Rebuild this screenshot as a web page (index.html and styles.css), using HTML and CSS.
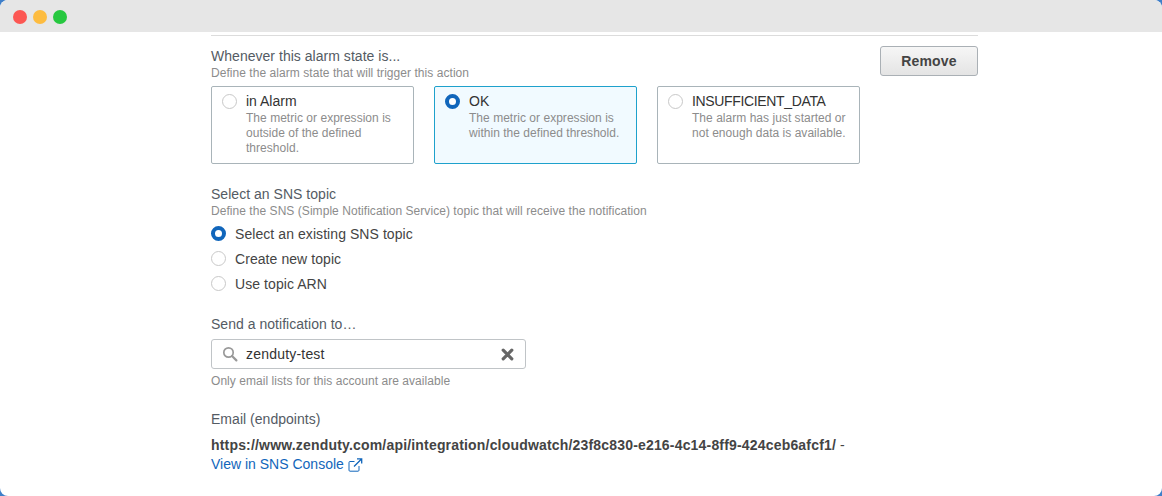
FILE: index.html
```html
<!DOCTYPE html>
<html lang="en">
<head>
  <meta charset="UTF-8">
  <title>Notification</title>
  <link rel="stylesheet" href="styles.css">
</head>
<body>
  <div class="window">
    <div class="titlebar">
      <span class="dot dot-red"></span>
      <span class="dot dot-yellow"></span>
      <span class="dot dot-green"></span>
    </div>

    <div class="content">
      <div class="rule"></div>

      <div class="state-head">
        <div>
          <div class="label">Whenever this alarm state is...</div>
          <div class="hint">Define the alarm state that will trigger this action</div>
        </div>
        <button class="remove">Remove</button>
      </div>

      <div class="cards">
        <div class="card">
          <span class="radio"></span>
          <div>
            <div class="card-title">in Alarm</div>
            <div class="card-text">The metric or expression is outside of the defined threshold.</div>
          </div>
        </div>
        <div class="card card-on">
          <span class="radio radio-on"></span>
          <div>
            <div class="card-title">OK</div>
            <div class="card-text">The metric or expression is within the defined threshold.</div>
          </div>
        </div>
        <div class="card">
          <span class="radio"></span>
          <div>
            <div class="card-title card-title-caps">INSUFFICIENT_DATA</div>
            <div class="card-text">The alarm has just started or not enough data is available.</div>
          </div>
        </div>
      </div>

      <div class="topic">
        <div class="label">Select an SNS topic</div>
        <div class="hint">Define the SNS (Simple Notification Service) topic that will receive the notification</div>
        <div class="options">
          <div class="option"><span class="radio radio-on"></span>Select an existing SNS topic</div>
          <div class="option"><span class="radio"></span>Create new topic</div>
          <div class="option"><span class="radio"></span>Use topic ARN</div>
        </div>
      </div>

      <div class="send">
        <div class="label">Send a notification to…</div>
        <div class="search">
          <svg class="search-icon" width="16" height="16" viewBox="0 0 16 16">
            <circle cx="6.5" cy="6.5" r="4.7" fill="none" stroke="#999" stroke-width="1.7"/>
            <path d="M10 10l4.4 4.4" fill="none" stroke="#999" stroke-width="2.2" stroke-linecap="round"/>
          </svg>
          <span class="search-text">zenduty-test</span>
          <svg class="clear-icon" width="13" height="13" viewBox="0 0 13 13">
            <path d="M2.2 2.200l8.600 8.600M10.800 2.200l-8.600 8.600" fill="none" stroke="#666" stroke-width="3.200" stroke-linecap="round"/>
          </svg>
        </div>
        <div class="hint">Only email lists for this account are available</div>
      </div>

      <div class="endpoints">
        <div class="label">Email (endpoints)</div>
        <div class="endpoint-url"><strong>https://www.zenduty.com/api/integration/cloudwatch/23f8c830-e216-4c14-8ff9-424ceb6afcf1/</strong> -</div>
        <a class="console-link" href="#">View in SNS Console
          <svg width="15" height="14" viewBox="0 0 15 14">
            <path d="M11 8v4.200a1 1 0 0 1-1 1H2a1 1 0 0 1-1-1V4.500a1 1 0 0 1 1-1h4.500" fill="none" stroke="#1166bb" stroke-width="1"/>
            <path d="M6 8.500L13.500 1M9 .8h4.700v4.700" fill="none" stroke="#1166bb" stroke-width="1.300"/>
          </svg>
        </a>
      </div>
    </div>
  </div>
</body>
</html>
```

FILE: styles.css
```css
* {
  margin: 0;
  padding: 0;
  box-sizing: border-box;
}

html, body {
  height: 100%;
  overflow: hidden;
}

body {
  background: #3f7fc9;
  font-family: 'Liberation Sans', Arial, sans-serif;
  color: #444;
}

.window {
  height: 496px;
  background: #fff;
  border-radius: 8px;
  overflow: hidden;
}

.titlebar {
  display: flex;
  align-items: center;
  gap: 6px;
  height: 32px;
  padding: 1px 0 0 13px;
  background: #e6e6e6;
}

.dot {
  width: 14px;
  height: 14px;
  border-radius: 50%;
}

.dot-red { background: #fc5753; }
.dot-yellow { background: #fdbc40; }
.dot-green { background: #27c840; }

.content {
  width: 767px;
  margin-left: 211px;
  padding-top: 3px;
}

.rule {
  height: 1px;
  background: #dcdcdc;
}

.state-head {
  display: flex;
  justify-content: space-between;
  align-items: flex-start;
  padding-top: 10px;
}

.label {
  font-size: 14px;
  line-height: 20px;
  letter-spacing: 0.03px;
  color: #545b64;
}

.hint {
  font-size: 12px;
  line-height: 14px;
  letter-spacing: 0.05px;
  color: #8c8c8c;
}

.remove {
  width: 98px;
  height: 30px;
  border: 1px solid #aab0b5;
  border-radius: 3px;
  background: linear-gradient(#f6f6f6, #e4e4e4);
  font-family: inherit;
  font-size: 14px;
  font-weight: bold;
  letter-spacing: 0.15px;
  color: #444;
}

.cards {
  display: flex;
  gap: 20px;
  margin-top: 6px;
}

.card {
  display: flex;
  gap: 9px;
  width: 203px;
  height: 78px;
  padding: 7px 10px;
  border: 1px solid #a9b4b9;
  border-radius: 2px;
}

.card-on {
  background: #f1faff;
  border-color: #1ea1cc;
}

.card-title {
  margin-bottom: 3px;
  font-size: 14px;
  line-height: 14px;
  color: #333;
}

.card-title-caps {
  letter-spacing: -0.35px;
}

.card-text {
  font-size: 12px;
  line-height: 15px;
  letter-spacing: 0.03px;
  color: #8c8c8c;
}

.radio {
  flex: none;
  width: 15px;
  height: 15px;
  border: 1px solid #c8c8c8;
  border-radius: 50%;
  background: #fff;
}

.radio-on {
  border: 4px solid #1166bb;
}

.topic {
  margin-top: 20px;
}

.options {
  margin-top: 3px;
}

.option {
  display: flex;
  align-items: center;
  gap: 9px;
  height: 25px;
  font-size: 14px;
  letter-spacing: 0.07px;
  color: #444;
}

.send {
  margin-top: 18px;
}

.search {
  display: flex;
  align-items: center;
  width: 315px;
  height: 30px;
  margin-top: 5px;
  padding: 0 11px 0 10px;
  border: 1px solid #c0c4c7;
  border-radius: 3px;
}

.search-icon {
  flex: none;
}

.search-text {
  flex: 1;
  margin-left: 8px;
  font-size: 14px;
  letter-spacing: 0.2px;
  color: #333;
}

.send .hint {
  margin-top: 5px;
}

.endpoints {
  margin-top: 21px;
}

.endpoint-url {
  margin-top: 6px;
  font-size: 14px;
  line-height: 20px;
  letter-spacing: 0.18px;
  color: #444;
}

.console-link {
  display: block;
  margin-top: -1px;
  font-size: 14px;
  line-height: 20px;
  color: #1166bb;
  text-decoration: none;
}

.console-link svg {
  vertical-align: -3px;
}
```
